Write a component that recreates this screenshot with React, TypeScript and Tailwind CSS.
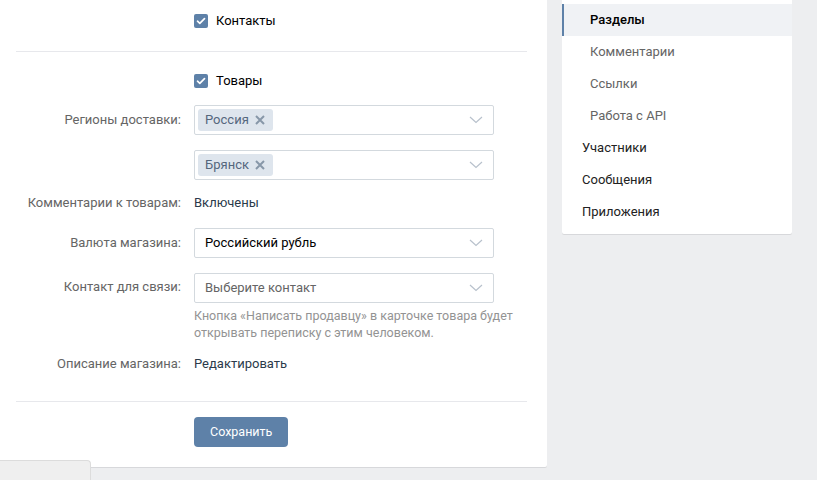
import React from "react";

const Check = () => (
  <span className="w-[14px] h-[14px] rounded-[2px] bg-[#5e81a8] flex items-center justify-center shrink-0">
    <svg width="10" height="8" viewBox="0 0 10 8" fill="none">
      <path d="M1.5 4.2 L3.8 6.3 L8.5 1.6" stroke="white" strokeWidth="1.7" strokeLinecap="round" strokeLinejoin="round" />
    </svg>
  </span>
);

const Chevron = () => (
  <svg width="14" height="8" viewBox="0 0 14 8" fill="none" className="shrink-0">
    <path d="M1 1 L7 6.5 L13 1" stroke="#b8c1cc" strokeWidth="1.2" />
  </svg>
);

const Token = ({ text }: { text: string }) => (
  <span className="h-[22px] rounded-[3px] bg-[#dee5ed] text-[#55677d] pl-[7px] pr-[8px] flex items-center gap-[6px]">
    <span>{text}</span>
    <svg width="10" height="10" viewBox="0 0 10 10" fill="none">
      <path d="M1 1 L9 9 M9 1 L1 9" stroke="#8797a8" strokeWidth="2" />
    </svg>
  </span>
);

const Row = ({
  label,
  children,
  className = "",
  labelClass = "",
}: {
  label: string;
  children: React.ReactNode;
  className?: string;
  labelClass?: string;
}) => (
  <div className={"flex " + className}>
    <div className={"w-[181px] shrink-0 text-right text-[#656565] " + labelClass}>{label}</div>
    <div className="ml-[13px] flex-1">{children}</div>
  </div>
);

export default function App() {
  return (
    <div
      className="relative w-[817px] h-[480px] bg-[#edeef0] overflow-hidden text-[13px] leading-[16px]"
      style={{ fontFamily: "Roboto, 'Open Sans', 'Liberation Sans', sans-serif" }}
    >
      <div className="flex items-start">
        {/* Main card */}
        <div className="w-[547px] h-[467px] bg-white rounded-b-[2px] shadow-[0_1px_0_0_#d7d8db] shrink-0">
          <div className="pt-[13px] pb-[22px] pl-[194px] flex items-center gap-[8px] text-black">
            <Check />
            <span>Контакты</span>
          </div>
          <div className="ml-[16px] mr-[20px] h-px bg-[#e7e8ec]" />
          <div className="pt-[21px] pl-[194px] flex items-center gap-[8px] text-black">
            <Check />
            <span>Товары</span>
          </div>

          <Row label="Регионы доставки:" className="mt-[16px] items-center">
            <div className="w-[300px] h-[30px] border border-[#d3d9de] rounded-[2px] flex items-center pl-[3px] pr-[10px] justify-between">
              <Token text="Россия" />
              <Chevron />
            </div>
          </Row>
          <Row label="" className="mt-[15px] items-center">
            <div className="w-[300px] h-[30px] border border-[#d3d9de] rounded-[2px] flex items-center pl-[3px] pr-[10px] justify-between">
              <Token text="Брянск" />
              <Chevron />
            </div>
          </Row>

          <Row label="Комментарии к товарам:" className="mt-[15px]">
            <span className="text-[#2b3a4a]">Включены</span>
          </Row>

          <Row label="Валюта магазина:" className="mt-[17px] items-center">
            <div className="w-[300px] h-[30px] border border-[#d3d9de] rounded-[2px] flex items-center pl-[10px] pr-[10px] justify-between text-black">
              <span>Российский рубль</span>
              <Chevron />
            </div>
          </Row>

          <Row label="Контакт для связи:" className="mt-[15px] items-start" labelClass="pt-[6px]">
            <div className="w-[300px] h-[30px] border border-[#d3d9de] rounded-[2px] flex items-center pl-[10px] pr-[10px] justify-between text-[#656565]">
              <span>Выберите контакт</span>
              <Chevron />
            </div>
            <div className="mt-[4px] w-[330px] text-[12.5px] leading-[17px] text-[#939393]">
              Кнопка «Написать продавцу» в карточке товара будет открывать переписку с этим человеком.
            </div>
          </Row>

          <Row label="Описание магазина:" className="mt-[15px]">
            <span className="text-[#2b3a4a]">Редактировать</span>
          </Row>

          <div className="ml-[16px] mr-[20px] mt-[29px] h-px bg-[#e7e8ec]" />

          <div className="pl-[194px] pt-[15px]">
            <button className="h-[30px] px-[16px] rounded-[4px] bg-[#5e81a8] text-white text-[12.5px]">
              Сохранить
            </button>
          </div>
        </div>

        {/* Sidebar */}
        <div className="ml-[15px] w-[230px] bg-white rounded-b-[2px] shadow-[0_1px_0_0_#d7d8db] pt-[4px] pb-[6px]">
          <div className="h-[32px] flex items-center bg-[#f0f2f5] border-l-2 border-[#5e81a8] pl-[26px] text-black font-medium">
            Разделы
          </div>
          <div className="h-[32px] flex items-center pl-[28px] text-[#656565]">Комментарии</div>
          <div className="h-[32px] flex items-center pl-[28px] text-[#656565]">Ссылки</div>
          <div className="h-[32px] flex items-center pl-[28px] text-[#656565]">Работа с API</div>
          <div className="h-[32px] flex items-center pl-[20px] text-[#222]">Участники</div>
          <div className="h-[32px] flex items-center pl-[20px] text-[#222]">Сообщения</div>
          <div className="h-[32px] flex items-center pl-[20px] text-[#222]">Приложения</div>
        </div>
      </div>

      <div className="absolute left-0 bottom-0 w-[91px] h-[20px] bg-[#efefef] border-t border-r border-[#dcdcdc] rounded-tr-[4px]" />
    </div>
  );
}
